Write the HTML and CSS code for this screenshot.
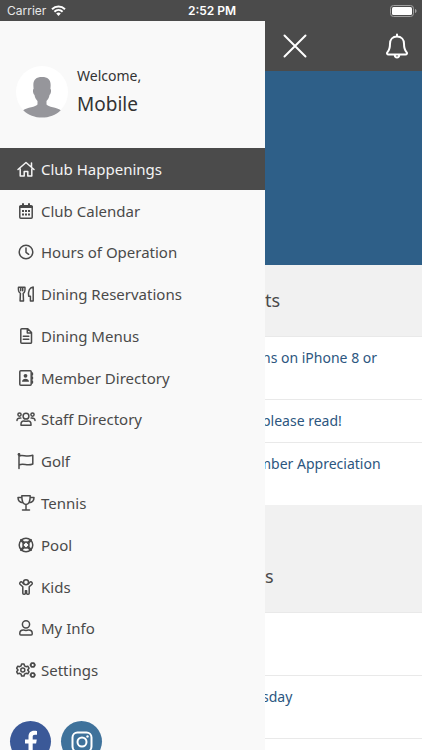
FILE: index.html
```html
<!DOCTYPE html>
<html lang="en">
<head>
<meta charset="utf-8">
<meta name="viewport" content="width=device-width, initial-scale=1">
<title>Club Happenings</title>
<link rel="stylesheet" href="styles.css">
</head>
<body>
<div class="status">
  <span class="status-carrier">Carrier
    <svg width="15" height="11" viewBox="0 0 15 11" fill="none" stroke="#fff" stroke-width="2"><path d="M1 4.2a9.4 9.4 0 0 1 13 0M3.4 6.7a6 6 0 0 1 8.2 0"/><path d="M5.2 8.6a3.4 3.4 0 0 1 4.6 0L7.5 11z" fill="#fff" stroke="none"/></svg>
  </span>
  <span class="status-time">2:52 PM</span>
  <span class="status-battery"><svg width="27" height="12" viewBox="0 0 27 12"><rect x=".5" y=".5" width="23" height="11" rx="3" fill="none" stroke="#a0a0a0"/><rect x="2" y="2" width="20" height="8" rx="1.5" fill="#fff"/><path d="M25 4c2 .6 2 3.400 0 4z" fill="#a0a0a0"/></svg></span>
</div>
<div class="app">
  <main class="page">
    <header class="topbar">
      <button class="icon-button" aria-label="Close menu"><svg width="24" height="24" viewBox="0 0 24 24" fill="none" stroke="#fff" stroke-width="2" stroke-linecap="round"><path d="M1.500 1.500l21 21M22.500 1.500l-21 21"/></svg></button>
      <button class="icon-button" aria-label="Notifications"><svg width="22" height="26" viewBox="0 0 22 26" fill="none" stroke="#fff" stroke-width="2" stroke-linejoin="round" stroke-linecap="round"><path d="M11 1.500v2M11 3.500c-4.500 0-7 3.300-7 7.300 0 5-1 6.700-2.500 8.300-1 1.100-.3 2.400 1 2.400h17c1.300 0 2-1.300 1-2.400C19 17.500 18 15.800 18 10.800c0-4-2.500-7.300-7-7.300zM8.700 22c.2 3.400 4.400 3.400 4.600 0"/></svg></button>
    </header>
    <div class="banner"></div>
    <h2 class="section-title">ts</h2>
    <ul class="feed">
      <li class="feed-item feed-item-tall"><a href="#">ns on iPhone 8 or</a></li>
      <li class="feed-item"><a href="#">please read!</a></li>
      <li class="feed-item feed-item-tall feed-item-wide"><a href="#">mber Appreciation</a></li>
    </ul>
    <h2 class="section-title section-title-tall">s</h2>
    <ul class="feed">
      <li class="feed-item feed-item-tall"></li>
      <li class="feed-item feed-item-tall"><a href="#">sday</a></li>
      <li class="feed-item feed-item-tall"></li>
    </ul>
  </main>
  <aside class="drawer">
    <div class="profile">
      <svg class="avatar" width="52" height="52" viewBox="0 0 52 52"><circle cx="26" cy="26" r="26" fill="#fff"/><path d="M26 11c-6 0-9 3-8.600 9l.2 3c-1.200.3-.6 5 .9 6 .5 3 1.500 4.500 3 6v3.500C20 41 11 41.500 7.200 44.200 17 54 35 54 44.800 44.200 41 41.500 32 41 30.500 38.500V35c1.500-1.500 2.500-3 3-6 1.500-1 2.100-5.700.9-6l.2-3c.4-6-2.600-9-8.600-9z" fill="#96969b"/></svg>
      <p class="greeting">Welcome,<strong class="name">Mobile</strong></p>
    </div>
    <nav>
      <ul class="menu">
        <li><a class="menu-link menu-link-active" href="#"><svg class="icon" viewBox="0 0 20 18"><path d="M2 9.500l8-7 8 7M4.200 8.500V16h4v-4.500h3.600V16h4V8.500M15.500 3v4"/></svg>Club Happenings</a></li>
        <li><a class="menu-link" href="#"><svg class="icon" viewBox="0 0 20 18"><rect x="3.800" y="3.800" width="12.400" height="12.400" rx="1"/><path d="M4 5h12" stroke-width="2"/><path d="M7 2v2M13 2v2" stroke-width="2"/><path class="dots" d="M6 9h2M9 9h2M12 9h2M6 12.500h2M9 12.500h2M12 12.500h2"/></svg>Club Calendar</a></li>
        <li><a class="menu-link" href="#"><svg class="icon" viewBox="0 0 20 18"><circle cx="10" cy="9" r="6.800"/><path d="M10 5v4.300l2.700 2"/></svg>Hours of Operation</a></li>
        <li><a class="menu-link" href="#"><svg class="icon" viewBox="0 0 20 18"><path d="M2.500 2.200h6.400c.5 3.500.3 5-1.700 6.200l.3 7.600H4.100l.3-7.600C2.300 7.200 2 5.700 2.500 2.200zM4.700 2.500v3.300M6.700 2.500v3.300M17.200 2v14h-2.800v-4.800h-1.700C12 6 13.500 2.400 17.200 2z"/></svg>Dining Reservations</a></li>
        <li><a class="menu-link" href="#"><svg class="icon" viewBox="0 0 20 18"><path d="M5.800 1.800h6l3.700 3.700v9.700a1 1 0 0 1-1 1H5.800a1 1 0 0 1-1-1V2.800a1 1 0 0 1 1-1zM11.300 2v4h4M7.300 9.300h5.500M7.300 12.200h5.500"/></svg>Dining Menus</a></li>
        <li><a class="menu-link" href="#"><svg class="icon" viewBox="0 0 20 18"><rect x="3.800" y="1.800" width="11.400" height="14.400" rx="1"/><path d="M16.400 4v2M16.400 8v2M16.400 12v2"/><circle class="solid" cx="9.500" cy="6.800" r="1.900"/><path class="solid" d="M6 12.800c0-4.200 7-4.200 7 0z"/></svg>Member Directory</a></li>
        <li><a class="menu-link" href="#"><svg class="icon" viewBox="0 0 20 18"><circle cx="10" cy="6.200" r="2.900"/><circle cx="3.500" cy="4.600" r="1.600"/><circle cx="16.500" cy="4.600" r="1.600"/><path d="M5 15.200v-1c0-2.500 1.500-3.400 3-3.200 1.500.5 2.500.5 4 0 1.500-.2 3 .7 3 3.200v1zM1 10.500c0-1.800 1-2.500 3.800-2.400M19 10.500c0-1.800-1-2.500-3.800-2.400"/></svg>Staff Directory</a></li>
        <li><a class="menu-link" href="#"><svg class="icon" viewBox="0 0 20 18"><path d="M3 2v14.500M3 4c4-2 7 1.700 13.800-.7V12c-6 2.700-9-1.500-13.800 1"/><circle class="solid" cx="3" cy="2.500" r="1.400"/></svg>Golf</a></li>
        <li><a class="menu-link" href="#"><svg class="icon" viewBox="0 0 20 18"><path d="M5.800 1.800h8.400c0 5-.8 8.700-4.200 8.700S5.800 6.800 5.800 1.800zM5.800 3.500H2c0 3 1.500 5 5 5.200M14.200 3.500H18c0 3-1.500 5-5 5.200M10 10.500V16M6.500 16h7"/></svg>Tennis</a></li>
        <li><a class="menu-link" href="#"><svg class="icon" viewBox="0 0 20 18"><circle cx="10" cy="9" r="6.800"/><circle cx="10" cy="9" r="3"/><path d="M5.200 4.200l2.700 2.700M14.800 4.200l-2.700 2.700M5.200 13.800l2.700-2.700M14.800 13.800l-2.700-2.700" stroke-width="2.500"/></svg>Pool</a></li>
        <li><a class="menu-link" href="#"><svg class="icon" viewBox="0 0 20 18"><circle cx="10" cy="4.300" r="2.500"/><path d="M7.500 5.800L5.900 4c-1.500-.6-2.800 1-1.900 2.300l2.800 2.500v6.400a1 1 0 0 0 1 1h.6a1 1 0 0 0 1-1v-2.500h1.200v2.500a1 1 0 0 0 1 1h.6a1 1 0 0 0 1-1V8.800L16 6.300C16.900 5 15.600 3.400 14.100 4l-1.600 1.800"/></svg>Kids</a></li>
        <li><a class="menu-link" href="#"><svg class="icon" viewBox="0 0 20 18"><circle cx="10" cy="5.300" r="3.600"/><path d="M3.800 15v-.7c0-2 1.500-3.400 3.500-3.400 1.800.7 3.600.7 5.400 0 2 0 3.500 1.400 3.500 3.400v.7a1 1 0 0 1-1 1H4.800a1 1 0 0 1-1-1z"/></svg>My Info</a></li>
        <li><a class="menu-link" href="#"><svg class="icon" viewBox="0 0 20 18"><path d="M5.600 3h2.400l.5 1.800 1.500.9 1.800-.5 1.200 2L11.700 9l1.300 1.800-1.200 2-1.800-.5-1.500.9L8 15H5.600l-.5-1.800-1.500-.9-1.800.5-1.100-2L2 9 .7 7.200l1.100-2 1.800.5 1.500-.9z"/><circle cx="6.800" cy="9" r="2"/><path d="M15.500 2.200h2.400l1 1.800-1 1.800h-2.400l-1-1.800zM15.500 12.200h2.400l1 1.800-1 1.800h-2.400l-1-1.800z" stroke-width="1.800"/></svg>Settings</a></li>
      </ul>
    </nav>
    <div class="social">
      <a class="social-link social-facebook" href="#" aria-label="Facebook"><svg width="24" height="24" viewBox="0 0 24 24"><path d="M9.500 24V13.500H6V9.500h3.500V6.800C9.500 3 11.500.8 15.200.8c1.200 0 2.300.1 2.800.3v3.600h-2c-1.800 0-2.300.8-2.300 2.200v2.600h4.100l-.7 4h-3.400V24z" fill="#fff"/></svg></a>
      <a class="social-link social-instagram" href="#" aria-label="Instagram"><svg width="22" height="22" viewBox="0 0 22 22" fill="none" stroke="#fff" stroke-width="2"><rect x="1.500" y="1.500" width="19" height="19" rx="5"/><circle cx="11" cy="11" r="4.500"/><circle cx="16.500" cy="5.500" r="1.200" fill="#fff" stroke="none"/></svg></a>
    </div>
  </aside>
</div>
</body>
</html>
```
FILE: styles.css
```css
* { box-sizing: border-box; }

body {
  margin: 0;
  height: 100vh;
  display: flex;
  flex-direction: column;
  overflow: hidden;
  background: #fff;
  color: #4a4a4a;
  font-family: "Noto Sans", "Open Sans", sans-serif;
}

ul, h2, p { margin: 0; padding: 0; }
ul { list-style: none; }
a { color: inherit; text-decoration: none; }
svg { display: block; flex: none; }

.status {
  flex: none;
  display: grid;
  grid-template-columns: 1fr auto 1fr;
  align-items: center;
  height: 21px;
  padding: 0 5px 0 7px;
  background: #4b4b4b;
  color: #fff;
  font: 12px/20px Inter, Roboto, sans-serif;
}
.status-carrier { display: flex; align-items: center; gap: 5px; color: #e8e8e8; }
.status-time { font-weight: 600; }
.status-battery { justify-self: end; }

.app {
  flex: 1;
  min-height: 0;
  display: grid;
  grid-template-columns: 265px 1fr;
  overflow: hidden;
}

/* The drawer shares the grid row with the page and lies over its left part. */
.page { grid-column: 1 / -1; grid-row: 1; }
.drawer {
  grid-column: 1;
  grid-row: 1;
  z-index: 1;
  background: #f9f9f9;
}

.topbar {
  display: flex;
  align-items: center;
  justify-content: space-between;
  height: 50px;
  padding: 0 14px 0 283px;
  background: #4b4b4b;
}
.icon-button { padding: 0; border: 0; background: none; }
.banner { height: 194px; background: #2e5f88; }

.section-title {
  height: 71px;
  padding-left: 265px;
  background: #f1f1f1;
  font-size: 18px;
  font-weight: 400;
  line-height: 70px;
}
.section-title-tall { height: 107px; padding-top: 36px; }

.feed-item {
  min-height: 43px;
  padding: 10px 16px 10px 262px;
  border-top: 1px solid #e9e9e9;
  color: #2c5680;
  font-size: 14px;
  line-height: 21px;
}
.feed-item-tall { min-height: 63px; }
.feed-item-wide { padding-left: 258px; }

.profile {
  display: flex;
  align-items: center;
  gap: 9px;
  height: 127px;
  padding: 14px 16px 0;
}
.greeting { padding-bottom: 3px; color: #333; font-size: 14px; line-height: 28px; }
.name { display: block; font-size: 19px; font-weight: 400; }

.menu {
  display: grid;
  grid-auto-rows: 1fr;
  height: 543px;
}
.menu-link {
  display: flex;
  align-items: center;
  gap: 5px;
  height: 100%;
  padding: 0 16px;
  font-size: 15px;
}
.menu-link-active { background: #4b4b4b; color: #f4f4f4; }
.icon {
  width: 20px;
  height: 18px;
  fill: none;
  stroke: currentColor;
  stroke-width: 1.5;
  stroke-linejoin: round;
  stroke-linecap: round;
}
.icon .solid { fill: currentColor; stroke: none; }
.icon .dots { stroke-width: 2; stroke-linecap: butt; }

.social { display: flex; gap: 10px; padding: 30px 10px 0; }
.social-link {
  display: grid;
  place-items: center;
  width: 41px;
  height: 41px;
  border-radius: 50%;
}
.social-facebook { background: #3b5998; }
.social-instagram { background: #3f729b; }
```
